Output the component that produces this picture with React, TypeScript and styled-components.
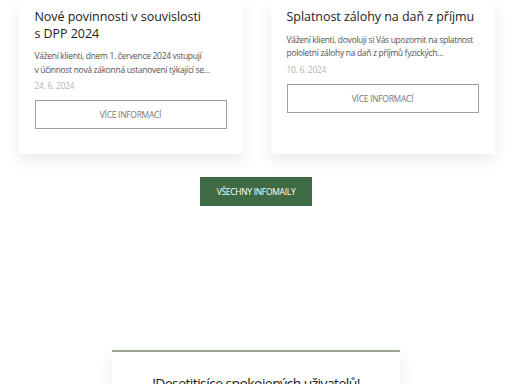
import styled, { createGlobalStyle } from "styled-components";

const GlobalStyle = createGlobalStyle`
  html, body {
    margin: 0;
    padding: 0;
    background: #ffffff;
    font-family: "Open Sans", "Liberation Sans", sans-serif;
    overflow: hidden;
  }
  * { box-sizing: border-box; }
`;

const Page = styled.div`
  width: 512px;
  height: 384px;
  overflow: hidden;
  display: flex;
  flex-direction: column;
  align-items: center;
  & > * { flex-shrink: 0; }
`;

const CardGrid = styled.div`
  display: grid;
  grid-template-columns: 224px 224px;
  gap: 28px;
  margin-left: 1px;
`;

const Card = styled.article`
  background: #fff;
  padding: 9px 16px 24px;
  box-shadow: 0 7px 14px rgba(0, 0, 0, 0.08);
  height: 154px;
`;

const Title = styled.h3`
  margin: 0;
  font-size: 12.5px;
  line-height: 16.5px;
  font-weight: 500;
  letter-spacing: -0.05px;
  color: #222;
`;

const Excerpt = styled.p`
  margin: 7px 0 0;
  font-size: 8.5px;
  line-height: 13.5px;
  letter-spacing: -0.32px;
  color: #555;
`;

const DateLine = styled.div`
  margin-top: 4px;
  font-size: 8.5px;
  line-height: 12px;
  letter-spacing: -0.3px;
  color: #b5b5b5;
`;

const OutlineButton = styled.a`
  margin-top: 8px;
  display: flex;
  align-items: center;
  justify-content: center;
  height: 29px;
  border: 1px solid #a0a0a0;
  font-size: 8.5px;
  letter-spacing: -0.3px;
  color: #777;
  text-transform: uppercase;
`;

const GreenButton = styled.a`
  margin-top: 23px;
  width: 112px;
  height: 29px;
  display: flex;
  align-items: center;
  justify-content: center;
  background: #3e6b43;
  color: #fff;
  font-size: 8.5px;
  letter-spacing: -0.3px;
  text-transform: uppercase;
`;

const Testimonial = styled.section`
  margin-top: 144px;
  width: 288px;
  border-top: 2px solid #98a690;
  background: #fff;
  box-shadow: 0 4px 14px rgba(0, 0, 0, 0.07);
  padding-top: 22px;
  height: 80px;
  text-align: center;
`;

const Quote = styled.p`
  margin: 0;
  font-size: 14px;
  line-height: 20px;
  letter-spacing: -0.6px;
  color: #222;
`;

const posts = [
  {
    title: "Nové povinnosti v\u00a0souvislosti s\u00a0DPP 2024",
    text: "Vážení klienti, dnem 1.\u00a0července 2024 vstupují v\u00a0účinnost nová zákonná ustanovení týkající se…",
    date: "24. 6. 2024",
  },
  {
    title: "Splatnost zálohy na daň z\u00a0příjmu",
    text: "Vážení klienti, dovoluji si Vás upozornit na splatnost pololetní zálohy na daň z\u00a0příjmů fyzických…",
    date: "10. 6. 2024",
  },
];

export default function App() {
  return (
    <>
      <GlobalStyle />
      <Page>
        <CardGrid>
          {posts.map((p) => (
            <Card key={p.date}>
              <Title>{p.title}</Title>
              <Excerpt>{p.text}</Excerpt>
              <DateLine>{p.date}</DateLine>
              <OutlineButton>Více informací</OutlineButton>
            </Card>
          ))}
        </CardGrid>
        <GreenButton>Všechny infomaily</GreenButton>
        <Testimonial>
          <Quote>!Desetitisíce spokojených uživatelů!</Quote>
        </Testimonial>
      </Page>
    </>
  );
}
